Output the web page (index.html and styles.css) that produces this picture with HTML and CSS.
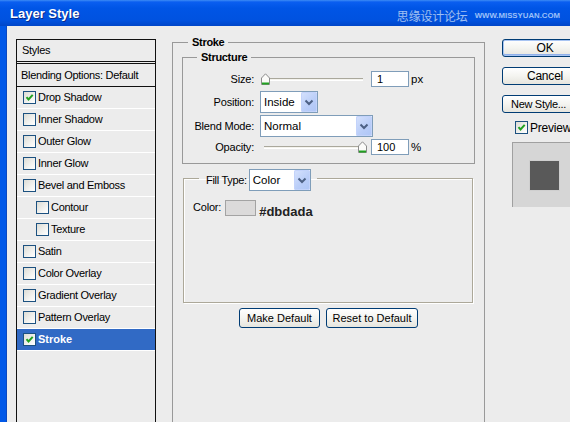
FILE: index.html
```html
<!DOCTYPE html>
<html lang="en">
<head>
  <meta charset="UTF-8">
  <title>Layer Style</title>
  <link rel="stylesheet" href="styles.css">
</head>
<body>
  <div class="window">
    <!-- Title bar -->
    <div class="titlebar">
      <span class="title">Layer Style</span>
      <span class="mark"><span class="mark-cn">思缘设计论坛</span><span class="mark-en">WWW.MISSYUAN.COM</span></span>
    </div>

    <div class="frame">
      <!-- Styles list -->
      <ul class="styles">
        <li class="head">Styles</li>
        <li class="blend">Blending Options: Default</li>
        <li><span class="cb on"><svg viewBox="0 0 11 11"><path d="M2.5 5.2l2 2.2 4.2-4.6"/></svg></span>Drop Shadow</li>
        <li><span class="cb"></span>Inner Shadow</li>
        <li><span class="cb"></span>Outer Glow</li>
        <li><span class="cb"></span>Inner Glow</li>
        <li><span class="cb"></span>Bevel and Emboss</li>
        <li class="sub"><span class="cb"></span>Contour</li>
        <li class="sub"><span class="cb"></span>Texture</li>
        <li><span class="cb"></span>Satin</li>
        <li><span class="cb"></span>Color Overlay</li>
        <li><span class="cb"></span>Gradient Overlay</li>
        <li><span class="cb"></span>Pattern Overlay</li>
        <li class="sel"><span class="cb on"><svg viewBox="0 0 11 11"><path d="M2.5 5.2l2 2.2 4.2-4.6"/></svg></span>Stroke</li>
      </ul>

      <!-- Stroke settings -->
      <div class="main">
        <fieldset class="stroke">
          <legend>Stroke</legend>

          <fieldset class="structure">
            <legend>Structure</legend>
            <div class="row row-size">
              <span class="lbl">Size:</span>
              <div class="slider">
                <div class="track"></div>
                <svg class="thumb" viewBox="0 0 9 12"><path d="M0.5 11.5V5L4.5 0.8 8.5 5V11.5Z" fill="#fbfbf9" stroke="#8c8c8c"/><path d="M1 10.5H8" stroke="#21a121" stroke-width="2"/></svg>
              </div>
              <span class="field">1</span>
              <span class="unit">px</span>
            </div>
            <div class="row row-pos">
              <span class="lbl">Position:</span>
              <div class="select sel-pos">Inside<span class="arrow"><svg viewBox="0 0 16 20"><path d="M4.5 8.5l3.5 3.5 3.5-3.5"/></svg></span></div>
            </div>
            <div class="row row-blend">
              <span class="lbl">Blend Mode:</span>
              <div class="select sel-blend">Normal<span class="arrow"><svg viewBox="0 0 16 20"><path d="M4.5 8.5l3.5 3.5 3.5-3.5"/></svg></span></div>
            </div>
            <div class="row row-op">
              <span class="lbl">Opacity:</span>
              <div class="slider slider-end">
                <div class="track"></div>
                <svg class="thumb" viewBox="0 0 9 12"><path d="M0.5 11.5V5L4.5 0.8 8.5 5V11.5Z" fill="#fbfbf9" stroke="#8c8c8c"/><path d="M1 10.5H8" stroke="#21a121" stroke-width="2"/></svg>
              </div>
              <span class="field">100</span>
              <span class="unit">%</span>
            </div>
          </fieldset>

          <fieldset class="fill">
            <legend><span class="legend-in">Fill Type:<span class="select sel-fill">Color<span class="arrow"><svg viewBox="0 0 16 20"><path d="M4.5 8.5l3.5 3.5 3.5-3.5"/></svg></span></span></span></legend>
            <div class="color-row">
              <span class="color-lbl">Color:</span>
              <span class="swatch"></span>
              <b class="hex">#dbdada</b>
            </div>
          </fieldset>

          <div class="defaults">
            <button class="btn">Make Default</button>
            <button class="btn">Reset to Default</button>
          </div>
        </fieldset>
      </div>

      <!-- Dialog buttons + preview -->
      <div class="side">
        <button class="btn big ok">OK</button>
        <button class="btn big">Cancel</button>
        <button class="btn big newstyle">New Style...</button>
        <div class="preview-check"><span class="cb on"><svg viewBox="0 0 11 11"><path d="M2.5 5.2l2 2.2 4.2-4.6"/></svg></span>Preview</div>
        <div class="preview"><div class="swatch-big"></div></div>
      </div>
    </div>
  </div>
</body>
</html>
```

FILE: styles.css
```css
/* General */
* {
  box-sizing: border-box;
}

body {
  margin: 0;
  width: 570px;
  height: 422px;
  overflow: hidden;
  font-family: "Liberation Sans", Arial, sans-serif;
  font-size: 11px;
  color: #000;
  background: #ececec;
}

.window {
  width: 570px;
  height: 422px;
  overflow: hidden;
}

/* Title bar */
.titlebar {
  height: 26px;
  display: flex;
  align-items: center;
  padding: 0 10px 0 10px;
  background: linear-gradient(#3d8cf5 0, #0a5ef0 2px, #0055e6 8px, #0052e0 20px, #0046c8 26px);
  color: #fff;
}

.title {
  font-size: 13px;
  font-weight: bold;
  text-shadow: 1px 1px #0b2a8a;
  margin-top: 1px;
}

.mark {
  margin-left: auto;
  display: flex;
  align-items: center;
  margin-top: 4px;
}

.mark-cn {
  font-family: "Noto Sans CJK SC", sans-serif;
  font-size: 12px;
  color: #9cc0f8;
  text-shadow: 0 0 1px #1b4fb8;
  letter-spacing: -0.2px;
}

.mark-en {
  margin-left: 7px;
  font-size: 7.8px;
  font-weight: bold;
  color: #9cc0f8;
  letter-spacing: 0;
}

/* Window frame */
.frame {
  display: flex;
  height: 396px;
  border-left: 6px solid #0058e8;
  box-shadow: inset 1px 0 #0a48c0;
}

/* Checkboxes */
.cb {
  display: inline-block;
  flex: none;
  width: 13px;
  height: 13px;
  border: 1px solid #1c5180;
  background: linear-gradient(135deg, #dcdcd5, #f6f6f4 70%, #fff);
  margin-right: 2px;
}

.cb svg {
  display: block;
  width: 11px;
  height: 11px;
}

.cb path {
  fill: none;
  stroke: #21a121;
  stroke-width: 2;
}

/* Styles list */
.styles {
  list-style: none;
  margin: 13px 0 0 10px;
  padding: 0;
  width: 140px;
  height: 400px;
  flex: none;
  border: 1px solid #111;
  letter-spacing: -0.3px;
}

.styles li {
  display: flex;
  align-items: center;
  height: 22px;
  padding-left: 6px;
  padding-bottom: 1px;
  border-bottom: 1px solid #fff;
}

.styles .head {
  height: 24px;
  padding-left: 5px;
  border-bottom: 3px double #111;
}

.styles .blend {
  height: 23px;
  padding-left: 4px;
  border-bottom: 1px solid #111;
}

.styles .sub {
  padding-left: 19px;
}

.styles .sel {
  background: #316ac5;
  color: #fff;
  font-weight: bold;
  letter-spacing: 0;
}

/* Main column */
.main {
  margin-left: 16px;
  width: 313px;
  flex: none;
}

fieldset {
  margin: 0;
  min-width: 0;
}

legend {
  line-height: 13px;
  font-weight: bold;
  letter-spacing: -0.3px;
}

.stroke {
  margin-top: 10px;
  padding: 2px 9px 0;
  border: 1px solid #999;
  height: 420px;
}

.stroke > legend {
  margin-left: 6px;
  padding: 0 4px;
}

.structure {
  padding: 6px 0 8px;
  border: 1px solid #999;
}

.structure > legend {
  margin-left: 14px;
  padding: 0 4px;
}

.row {
  display: flex;
  align-items: center;
}

.lbl {
  width: 71px;
  text-align: right;
  margin-right: 6px;
  letter-spacing: -0.2px;
}

.row-size {
  height: 18px;
}

.row-pos {
  height: 22px;
  margin-top: 3px;
}

.row-blend {
  height: 22px;
  margin-top: 2px;
}

.row-op {
  height: 16px;
  margin-top: 2px;
}

/* Slider */
.slider {
  position: relative;
  width: 111px;
  height: 100%;
}

.track {
  position: absolute;
  left: 2px;
  right: 8px;
  top: 8px;
  height: 3px;
  background: #f4f3ee;
  border-top: 1px solid #aaa89c;
  border-bottom: 1px solid #fff;
}

.thumb {
  position: absolute;
  left: 1px;
  top: 3px;
  width: 9px;
  height: 12px;
}

.slider-end .track {
  left: 4px;
  top: 7px;
}

.slider-end .thumb {
  left: 98px;
  top: 2px;
}

/* Inputs */
.field {
  width: 38px;
  height: 16px;
  border: 1px solid #7f9db9;
  background: #fff;
  padding-left: 5px;
  line-height: 14px;
}

.unit {
  margin-left: 2px;
  font-size: 11.5px;
}

.select {
  display: flex;
  align-items: center;
  height: 22px;
  border: 1px solid #7f9db9;
  background: #fff;
  padding-left: 3px;
  font-weight: normal;
  font-size: 11.5px;
  letter-spacing: 0;
}

.sel-pos {
  width: 58px;
}

.sel-blend {
  width: 113px;
}

.sel-fill {
  width: 62px;
  margin-left: 2px;
}

.arrow {
  margin-left: auto;
  width: 16px;
  height: 20px;
  border-radius: 2px;
  background: linear-gradient(135deg, #d6e2fd, #b9cdf8 60%, #aec5f6);
  box-shadow: inset 0 0 0 1px #c3d3fb;
}

.arrow svg {
  display: block;
  width: 16px;
  height: 20px;
}

.arrow path {
  fill: none;
  stroke: #4d6185;
  stroke-width: 2;
}

/* Fill group */
.fill {
  margin: 2px 2px 0 1px;
  padding: 9px 0 86px 9px;
  border: 1px solid #aca899;
  box-shadow: 1px 1px 0 #fff, inset 1px 1px 0 #fff;
}

.fill > legend {
  margin-left: 6px;
  padding: 0 6px 0 7px;
  font-weight: normal;
}

.legend-in {
  display: flex;
  align-items: center;
  padding-top: 3px;
}

.color-row {
  display: flex;
  align-items: flex-start;
  height: 16px;
}

.color-lbl {
  margin-top: 1px;
  letter-spacing: -0.2px;
}

.swatch {
  width: 31px;
  height: 16px;
  margin-left: 4px;
  border: 1px solid #a3a3a3;
  background: #dbdada;
}

.hex {
  margin: 4px 0 0 3px;
  font-size: 13px;
  color: #222;
}

/* Buttons */
.defaults {
  display: flex;
  justify-content: center;
  gap: 6px;
  margin-top: 5px;
}

.btn {
  font-family: "Liberation Sans", Arial, sans-serif;
  font-size: 11px;
  height: 20px;
  padding: 0;
  border: 1px solid #003c74;
  border-radius: 3px;
  background: linear-gradient(#fff, #f4f4f0 50%, #e6e5de);
  color: #000;
}

.defaults .btn:first-child {
  width: 81px;
}

.defaults .btn:last-child {
  width: 92px;
}

/* Side column */
.side {
  margin-left: 17px;
  padding-top: 13px;
  width: 90px;
  flex: none;
}

.btn.big {
  display: block;
  width: 86px;
  height: 18px;
  margin-bottom: 10px;
  font-size: 12px;
  letter-spacing: -0.2px;
}

.btn.newstyle {
  text-align: left;
  padding-left: 8px;
  font-size: 11px;
  letter-spacing: -0.3px;
  white-space: nowrap;
}

.btn.ok {
  box-shadow: inset 0 0 0 1px #a8c4f2, inset 0 -1px 0 1px #8fb0ea;
}

.preview-check {
  display: flex;
  align-items: center;
  margin: -2px 0 0 13px;
  height: 13px;
  font-size: 12px;
  letter-spacing: -0.2px;
}

.preview {
  margin: 8px 0 0 10px;
  height: 65px;
  background: #d6d6d6;
  border-left: 1px solid #a0a0a0;
  border-top: 1px solid #a0a0a0;
  padding: 18px 0 0 17px;
}

.swatch-big {
  width: 29px;
  height: 29px;
  background: #595959;
  box-shadow: 0 0 0 1px #cfcfcf;
}
```
